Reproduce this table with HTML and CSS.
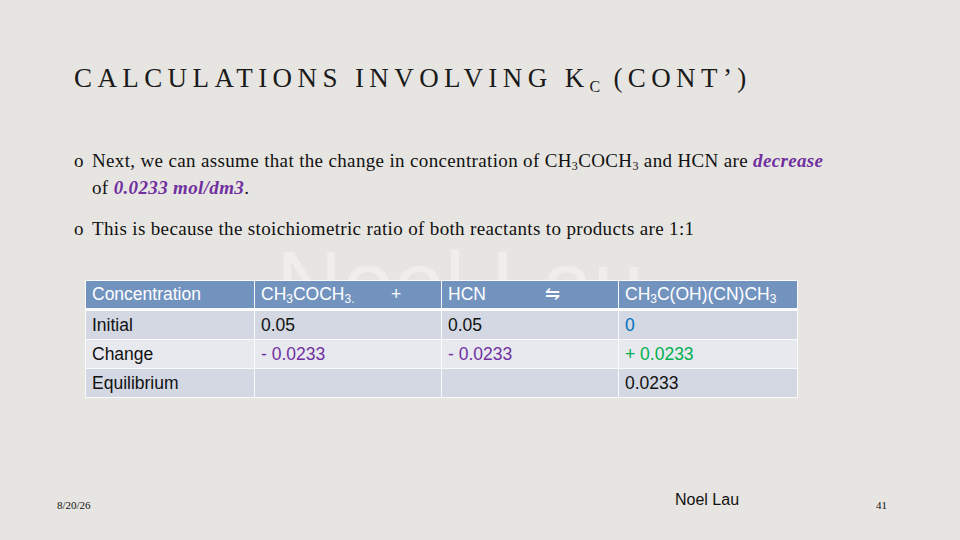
FILE: index.html
```html
<!DOCTYPE html>
<html>
<head>
<meta charset="utf-8">
<link rel="stylesheet" href="styles.css">
</head>
<body>
<div class="slide">
  <h1 class="title">CALCULATIONS INVOLVING K<sub class="tsub">C</sub> (CONT’)</h1>
  <ul class="bullets">
    <li class="bullet">Next, we can assume that the change in concentration of CH<sub>3</sub>COCH<sub>3</sub> and HCN are <em class="hl">decrease</em> of <em class="hl">0.0233 mol/dm3</em>.</li>
    <li class="bullet">This is because the stoichiometric ratio of both reactants to products are 1:1</li>
  </ul>
  <div class="table-area">
    <div class="watermark">Noel Lau</div>
    <table class="ice">
      <colgroup><col class="c1"><col class="c2"><col class="c3"><col class="c4"></colgroup>
      <thead>
        <tr>
          <th>Concentration</th>
          <th><span class="lead lead-a">CH<sub>3</sub>COCH<sub>3.</sub></span><span class="op">+</span></th>
          <th><span class="lead lead-b">HCN</span><span class="op">⇋</span></th>
          <th>CH<sub>3</sub>C(OH)(CN)CH<sub>3</sub></th>
        </tr>
      </thead>
      <tbody>
        <tr class="odd"><td>Initial</td><td>0.05</td><td>0.05</td><td class="blue">0</td></tr>
        <tr class="even"><td>Change</td><td class="purple">- 0.0233</td><td class="purple">- 0.0233</td><td class="green">+ 0.0233</td></tr>
        <tr class="odd"><td>Equilibrium</td><td></td><td></td><td>0.0233</td></tr>
      </tbody>
    </table>
  </div>
  <div class="footer">
    <span class="date">8/20/26</span>
    <span class="author">Noel Lau</span>
    <span class="page">41</span>
  </div>
</div>
</body>
</html>
```
FILE: styles.css
```css
html, body {
  margin: 0;
  padding: 0;
}
body {
  background: #e7e5e1;
}
.slide {
  width: 960px;
  height: 540px;
  background: #e7e5e1;
  position: relative;
  overflow: hidden;
  display: flex;
  flex-direction: column;
  font-family: "Liberation Serif", serif;
  color: #111;
}
.title {
  margin: 0;
  padding: 63px 0 0 74px;
  font-family: "Liberation Serif", serif;
  font-weight: normal;
  font-size: 27px;
  line-height: 30px;
  letter-spacing: 0.2em;
  color: #1a1a1a;
  white-space: nowrap;
}
.tsub {
  font-size: 16px;
  vertical-align: -5px;
  line-height: 0;
  letter-spacing: 0;
  margin-right: 1px;
}
.bullets {
  list-style: none;
  margin: 54px 0 0 0;
  padding: 0 0 0 92px;
  width: 745px;
}
.bullet {
  position: relative;
  font-size: 19px;
  line-height: 27px;
  letter-spacing: 0.35px;
  margin-bottom: 14px;
}
.bullet::before {
  content: "o";
  position: absolute;
  left: -18px;
  top: 0;
}
.bullet sub {
  font-size: 12px;
  line-height: 0;
  vertical-align: -3px;
}
.hl {
  color: #7030a0;
  font-weight: bold;
  font-style: italic;
}
.table-area {
  position: relative;
  margin: 24px 0 0 85px;
  width: 712px;
}
.watermark {
  position: absolute;
  left: 191px;
  top: -42px;
  font-family: "Liberation Sans", sans-serif;
  font-size: 92px;
  line-height: 1;
  color: #efeeec;
  white-space: nowrap;
  z-index: 0;
}
.ice {
  position: relative;
  z-index: 1;
  border-collapse: collapse;
  width: 712px;
  table-layout: fixed;
  font-family: "Liberation Sans", sans-serif;
  font-size: 17.5px;
  color: #111;
}
.c1 { width: 169px; }
.c2 { width: 187px; }
.c3 { width: 177px; }
.c4 { width: 179px; }
.ice th, .ice td {
  border: 1px solid #fafafa;
  padding: 0 6px;
  text-align: left;
  white-space: nowrap;
}
.ice th {
  background: #7393bf;
  color: #fff;
  font-weight: normal;
  height: 27px;
  border-bottom: 3px solid #fafafa;
}
.ice td {
  height: 28px;
}
.ice sub {
  font-size: 12px;
  line-height: 0;
  vertical-align: -3px;
}
.lead {
  display: inline-block;
}
.lead-a { width: 130px; }
.lead-b { width: 97px; }
.odd td { background: #d3d8e3; }
.even td { background: #e7e9ef; }
.blue { color: #0070c0; }
.purple { color: #7030a0; }
.green { color: #00b050; }
.footer {
  margin-top: auto;
  height: 60px;
  display: flex;
  align-items: flex-start;
  padding: 0 0 0 57px;
  position: relative;
}
.date {
  font-size: 11px;
  margin-top: 19px;
  width: 618px;
}
.author {
  font-family: "Liberation Sans", sans-serif;
  font-size: 16px;
  margin-top: 11px;
  width: 201px;
}
.page {
  font-size: 11px;
  margin-top: 19px;
}
```
